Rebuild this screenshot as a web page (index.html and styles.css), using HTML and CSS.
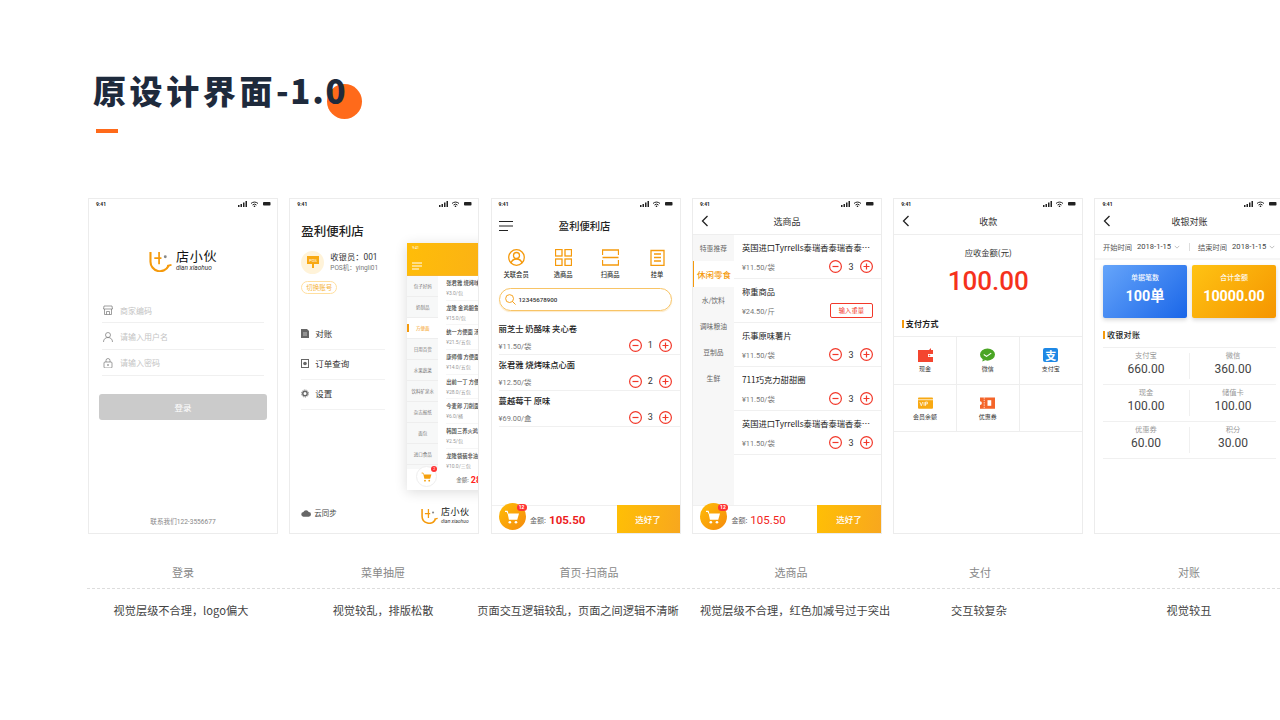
FILE: index.html
```html
<!DOCTYPE html>
<html lang="zh-CN">
<head>
<meta charset="utf-8">
<title>原设计界面-1.0</title>
<link rel="stylesheet" href="styles.css">
</head>
<body>
<svg class="defs" width="0" height="0">
  <symbol id="status" viewBox="0 0 33 6">
    <rect x="0" y="4" width="1.5" height="2" fill="#222"/><rect x="2.5" y="3" width="1.5" height="3" fill="#222"/><rect x="5" y="1.5" width="1.5" height="4.500" fill="#222"/><rect x="7.500" y="0" width="1.500" height="6" fill="#222"/>
    <path d="M13 2.500a5 5 0 0 1 7 0M14.500 4a3 3 0 0 1 4 0" fill="none" stroke="#222" stroke-width="1"/><circle cx="16.500" cy="5.300" r=".8" fill="#222"/>
    <rect x="25" y="1" width="7.500" height="3.500" rx=".8" fill="#222"/>
  </symbol>
  <symbol id="logo" viewBox="0 0 24 22">
    <path d="M1.500 1v10a10 10 0 0 0 19 4.500" fill="none" stroke="#f59a0c" stroke-width="2.200"/>
    <path d="M19 15.500l4.500-1" fill="none" stroke="#f59a0c" stroke-width="1.800"/>
    <path d="M10.500 1v13M5.500 7.500h7.500" fill="none" stroke="#f59a0c" stroke-width="1.800"/>
    <circle cx="17" cy="6" r="1.500" fill="#888"/>
  </symbol>
  <symbol id="back" viewBox="0 0 10 12"><path d="M7.500 1L2.500 6l5 5" fill="none" stroke="#222" stroke-width="1.300"/></symbol>
  <symbol id="minus" viewBox="0 0 13 13"><circle cx="6.500" cy="6.500" r="5.900" fill="none" stroke="#f2382a"/><path d="M3.500 6.500h6" stroke="#f2382a"/></symbol>
  <symbol id="plus" viewBox="0 0 13 13"><circle cx="6.500" cy="6.500" r="5.900" fill="none" stroke="#f2382a"/><path d="M3.500 6.500h6M6.500 3.500v6" stroke="#f2382a"/></symbol>
  <symbol id="cart" viewBox="0 0 18 16"><path d="M1 1.500h2.500l.7 2.500" fill="none" stroke="currentColor" stroke-width="1.300"/><path d="M4 4h13l-2 7H5.500z" fill="currentColor"/><circle cx="6.500" cy="14" r="1.500" fill="currentColor"/><circle cx="13.500" cy="14" r="1.500" fill="currentColor"/></symbol>
  <symbol id="chev" viewBox="0 0 8 5"><path d="M1 1l3 3 3-3" fill="none" stroke="#888" stroke-width=".7"/></symbol>
</svg>

<main class="page">
  <header class="hero">
    <h1 class="hero-title">原设计界面<span class="hero-ver">-1.0</span></h1>
    <span class="hero-dot"></span>
    <div class="hero-bar"></div>
  </header>

  <section class="phones">
    <!-- 登录 -->
    <article class="phone">
      <div class="status"><span>9:41</span><svg class="status-icons"><use href="#status"/></svg></div>
      <div class="brand login-brand">
        <svg class="brand-mark"><use href="#logo"/></svg>
        <div class="brand-text"><b>店小伙</b><i>dian xiaohuo</i></div>
      </div>
      <div class="login-form">
        <div class="field">
          <svg class="field-icon" viewBox="0 0 10 10"><path d="M1 1h8l.5 3H.5zM1.500 4v5.500h7V4M3.500 9.500V6.500h3v3" fill="none" stroke="#777" stroke-width=".7"/></svg>
          <span>商家编码</span>
        </div>
        <div class="field">
          <svg class="field-icon" viewBox="0 0 10 10"><circle cx="5" cy="3" r="2.500" fill="none" stroke="#777" stroke-width=".7"/><path d="M.5 10c0-3 2-4.500 4.500-4.500S9.500 7 9.500 10" fill="none" stroke="#777" stroke-width=".7"/></svg>
          <span>请输入用户名</span>
        </div>
        <div class="field">
          <svg class="field-icon" viewBox="0 0 10 10"><rect x="1" y="4" width="8" height="6" rx="1" fill="none" stroke="#777" stroke-width=".7"/><path d="M3 4V2.500a2 2 0 0 1 4 0V4" fill="none" stroke="#777" stroke-width=".7"/><rect x="4.500" y="6" width="1" height="2" fill="#777"/></svg>
          <span>请输入密码</span>
        </div>
        <div class="login-btn">登录</div>
      </div>
      <div class="login-foot">联系我们122-3556677</div>
    </article>

    <!-- 菜单抽屉 -->
    <article class="phone">
      <div class="status"><span>9:41</span><svg class="status-icons"><use href="#status"/></svg></div>
      <div class="menu">
        <h2 class="menu-title">盈利便利店</h2>
        <div class="user">
          <div class="avatar">
            <svg viewBox="0 0 12 13"><rect x="0" y="0" width="12" height="8" fill="#f8a913"/><rect x="5" y="8" width="2" height="4" fill="#f8a913"/><text x="6" y="5.500" text-anchor="middle" font-size="4" fill="#fff">POS</text></svg>
          </div>
          <div class="user-text"><b>收银员：001</b><span>POS机：yingli01</span></div>
        </div>
        <div class="switch">切换账号</div>
        <ul class="menu-list">
          <li><svg viewBox="0 0 8 9"><path d="M0 0h6l2 2v7H0z" fill="#666"/><path d="M2 4h4M2 6h4" stroke="#fff" stroke-width=".6"/></svg>对账</li>
          <li><svg viewBox="0 0 8 9"><rect x=".5" y=".5" width="7" height="8" fill="none" stroke="#666"/><circle cx="4" cy="4.500" r="1.800" fill="#666"/></svg>订单查询</li>
          <li><svg viewBox="0 0 9 9"><circle cx="4.500" cy="4.500" r="2.500" fill="none" stroke="#666" stroke-width="1.600"/><circle cx="4.500" cy="4.500" r="4" fill="none" stroke="#666" stroke-width=".9" stroke-dasharray="1.300 1.200"/></svg>设置</li>
        </ul>
      </div>
      <div class="menu-foot">
        <div class="sync"><svg viewBox="0 0 11 8"><path d="M3 8a2.500 2.500 0 0 1-.4-5A3.200 3.200 0 0 1 8.500 3 2.500 2.500 0 0 1 8.500 8z" fill="#666"/></svg>云同步</div>
        <div class="brand small-brand">
          <svg class="brand-mark"><use href="#logo"/></svg>
          <div class="brand-text"><b>店小伙</b><i>dian xiaohuo</i></div>
        </div>
      </div>
      <div class="drawer">
        <div class="drawer-head">
          <span>9:41</span>
          <svg viewBox="0 0 10 8"><path d="M0 1h10M0 4h10M0 7h7" stroke="#fff"/></svg>
        </div>
        <div class="drawer-body">
          <ul class="drawer-side">
            <li>包子好妈</li><li>奶制品</li><li class="on">方便面</li><li>日用百货</li><li>水果蔬菜</li><li>饮料矿泉水</li><li>杂志报纸</li><li>面包</li><li>进口食品</li>
          </ul>
          <div class="drawer-list">
            <div class="d-item"><b>张君雅 烧烤味点心面</b><span>¥3.0/包</span></div>
            <div class="d-item"><b>龙隆 金鸡鲍鱼面</b><span>¥15.0/包</span></div>
            <div class="d-item"><b>统一方便面 汤达人</b><span>¥21.5/五包</span></div>
            <div class="d-item"><b>康师傅 方便面袋装</b><span>¥14.0/五包</span></div>
            <div class="d-item"><b>出前一丁 方便面</b><span>¥28.0/五包</span></div>
            <div class="d-item"><b>今麦郎 刀削面桶</b><span>¥6.0/桶</span></div>
            <div class="d-item"><b>韩国三养火鸡面</b><span>¥2.5/包</span></div>
            <div class="d-item"><b>龙隆袋装非油炸</b><span>¥10.0/三包</span></div>
          </div>
        </div>
        <div class="drawer-foot">
          <div class="d-cart"><svg><use href="#cart"/></svg><em>2</em></div>
          <span class="d-label">金额:</span><b class="d-total">28.50</b>
        </div>
      </div>
    </article>

    <!-- 首页-扫商品 -->
    <article class="phone">
      <div class="status"><span>9:41</span><svg class="status-icons"><use href="#status"/></svg></div>
      <div class="home-head">
        <svg viewBox="0 0 14 10"><path d="M0 .5h14M0 5h14M0 9.500h9" stroke="#222"/></svg>
        <span>盈利便利店</span>
      </div>
      <div class="actions">
        <div class="action"><svg viewBox="0 0 17 17"><circle cx="8.500" cy="8.500" r="7.800" fill="none" stroke="#f59a0c"/><circle cx="8.500" cy="6.500" r="3" fill="none" stroke="#f59a0c"/><path d="M3 14c1-3 3-4 5.500-4s4.500 1 5.500 4" fill="none" stroke="#f59a0c"/></svg><span>关联会员</span></div>
        <div class="action"><svg viewBox="0 0 17 17"><g fill="none" stroke="#f59a0c"><rect x=".5" y=".5" width="6.500" height="6.500"/><rect x="10" y=".5" width="6.500" height="6.500"/><rect x=".5" y="10" width="6.500" height="6.500"/><rect x="10" y="10" width="6.500" height="6.500"/></g></svg><span>选商品</span></div>
        <div class="action"><svg viewBox="0 0 17 17"><path d="M.5 6V1h16v5M.5 11v5h16v-5M.5 8.500h16" fill="none" stroke="#f59a0c"/></svg><span>扫商品</span></div>
        <div class="action"><svg viewBox="0 0 17 17"><path d="M2 1.500h13v15H2zM5 5h7M5 8.500h7M5 12h7" fill="none" stroke="#f59a0c"/></svg><span>挂单</span></div>
      </div>
      <div class="search">
        <svg viewBox="0 0 12 12"><circle cx="5" cy="5" r="4.300" fill="none" stroke="#f59a0c"/><path d="M8 8l3.500 3.500" stroke="#f59a0c"/></svg>
        <span>12345678900</span>
      </div>
      <div class="goods">
        <div class="good"><div class="good-name">丽芝士 奶酪味 夹心卷</div><div class="good-row"><span>¥11.50/袋</span><div class="qty"><svg><use href="#minus"/></svg><b>1</b><svg><use href="#plus"/></svg></div></div></div>
        <div class="good"><div class="good-name">张君雅 烧烤味点心面</div><div class="good-row"><span>¥12.50/袋</span><div class="qty"><svg><use href="#minus"/></svg><b>2</b><svg><use href="#plus"/></svg></div></div></div>
        <div class="good"><div class="good-name">蔓越莓干 原味</div><div class="good-row"><span>¥69.00/盒</span><div class="qty"><svg><use href="#minus"/></svg><b>3</b><svg><use href="#plus"/></svg></div></div></div>
      </div>
      <div class="cartbar">
        <div class="cart-ball"><svg><use href="#cart"/></svg><em>12</em></div>
        <span class="cart-label">金额:</span><b class="cart-total">105.50</b>
        <div class="cart-btn">选好了</div>
      </div>
    </article>

    <!-- 选商品 -->
    <article class="phone">
      <div class="status"><span>9:41</span><svg class="status-icons"><use href="#status"/></svg></div>
      <div class="nav"><svg><use href="#back"/></svg><span>选商品</span></div>
      <div class="shop">
        <ul class="cats">
          <li>特惠推荐</li><li class="on">休闲零食</li><li>水/饮料</li><li>调味粮油</li><li>豆制品</li><li>生鲜</li>
        </ul>
        <div class="shop-list">
          <div class="s-item"><div class="s-name">英国进口Tyrrells泰瑞香泰瑞香泰瑞香</div><div class="s-row"><span>¥11.50/袋</span><div class="qty"><svg><use href="#minus"/></svg><b>3</b><svg><use href="#plus"/></svg></div></div></div>
          <div class="s-item"><div class="s-name">称重商品</div><div class="s-row"><span>¥24.50/斤</span><div class="weigh">输入重量</div></div></div>
          <div class="s-item"><div class="s-name">乐事原味薯片</div><div class="s-row"><span>¥11.50/袋</span><div class="qty"><svg><use href="#minus"/></svg><b>3</b><svg><use href="#plus"/></svg></div></div></div>
          <div class="s-item"><div class="s-name">711巧克力甜甜圈</div><div class="s-row"><span>¥11.50/袋</span><div class="qty"><svg><use href="#minus"/></svg><b>3</b><svg><use href="#plus"/></svg></div></div></div>
          <div class="s-item"><div class="s-name">英国进口Tyrrells泰瑞香泰瑞香泰瑞香</div><div class="s-row"><span>¥11.50/袋</span><div class="qty"><svg><use href="#minus"/></svg><b>3</b><svg><use href="#plus"/></svg></div></div></div>
        </div>
      </div>
      <div class="cartbar cartbar-alt">
        <div class="cart-ball"><svg><use href="#cart"/></svg><em>12</em></div>
        <span class="cart-label">金额:</span><b class="cart-total">105.50</b>
        <div class="cart-btn">选好了</div>
      </div>
    </article>

    <!-- 支付 -->
    <article class="phone">
      <div class="status"><span>9:41</span><svg class="status-icons"><use href="#status"/></svg></div>
      <div class="nav"><svg><use href="#back"/></svg><span>收款</span></div>
      <div class="due-label">应收金额(元)</div>
      <div class="due">100.00</div>
      <div class="mark pay-mark">支付方式</div>
      <div class="pay-grid">
        <div class="pay"><svg viewBox="0 0 15 14"><path d="M0 2h11l2-2v2h2v12H0z" fill="#f4452f"/><rect x="10" y="6" width="5" height="3" fill="#fff"/><circle cx="11.500" cy="7.500" r=".8" fill="#f4452f"/></svg><span>现金</span></div>
        <div class="pay"><svg viewBox="0 0 16 14"><ellipse cx="8" cy="6.500" rx="8" ry="6.500" fill="#4aa524"/><path d="M3 11l-.5 3 3-1.500z" fill="#4aa524"/><path d="M4 6.500l3 2 5-3.500" fill="none" stroke="#fff" stroke-width="1.200"/></svg><span>微信</span></div>
        <div class="pay"><i class="alipay">支</i><span>支付宝</span></div>
        <div class="pay"><svg viewBox="0 0 16 12"><rect width="16" height="12" rx="1" fill="#f8a913"/><path d="M0 2.500h16" stroke="#fff" stroke-width=".8"/><path d="M2 5l1.500 4L5 5M6.500 5v4M8 9V5h2v2H8" fill="none" stroke="#fff" stroke-width=".8"/></svg><span>会员余额</span></div>
        <div class="pay"><svg viewBox="0 0 16 12"><path d="M0 0h16v12H0V8a2 2 0 0 0 0-4z" fill="#f4652a"/><path d="M4.500 0v12" stroke="#fff" stroke-width=".8" stroke-dasharray="1.500 1"/><rect x="8" y="3" width="4" height="6" fill="#fff"/></svg><span>优惠券</span></div>
        <div class="pay"></div>
      </div>
    </article>

    <!-- 对账 -->
    <article class="phone">
      <div class="status"><span>9:41</span><svg class="status-icons"><use href="#status"/></svg></div>
      <div class="nav"><svg><use href="#back"/></svg><span>收银对账</span></div>
      <div class="filters">
        <div class="filter"><span>开始时间</span><b>2018-1-15</b><svg><use href="#chev"/></svg></div>
        <i class="filter-sep"></i>
        <div class="filter"><span>结束时间</span><b>2018-1-15</b><svg><use href="#chev"/></svg></div>
      </div>
      <div class="cards">
        <div class="card card-blue"><span>单据笔数</span><b>100单</b></div>
        <div class="card card-orange"><span>合计金额</span><b>10000.00</b></div>
      </div>
      <div class="mark rec-mark">收银对账</div>
      <div class="rec">
        <div class="rec-row"><div class="rec-cell"><span>支付宝</span><b>660.00</b></div><i></i><div class="rec-cell"><span>微信</span><b>360.00</b></div></div>
        <div class="rec-row"><div class="rec-cell"><span>现金</span><b>100.00</b></div><i></i><div class="rec-cell"><span>储值卡</span><b>100.00</b></div></div>
        <div class="rec-row"><div class="rec-cell"><span>优惠券</span><b>60.00</b></div><i></i><div class="rec-cell"><span>积分</span><b>30.00</b></div></div>
      </div>
    </article>
  </section>

  <div class="captions">
    <span>登录</span><span>菜单抽屉</span><span>首页-扫商品</span><span>选商品</span><span>支付</span><span>对账</span>
  </div>
  <div class="dash"></div>
  <div class="notes">
    <span>视觉层级不合理，logo偏大</span><span>视觉较乱，排版松散</span><span>页面交互逻辑较乱，页面之间逻辑不清晰</span><span>视觉层级不合理，红色加减号过于突出</span><span>交互较复杂</span><span>视觉较丑</span>
  </div>
</main>
</body>
</html>
```

FILE: styles.css
```css
* { box-sizing: border-box; }
html, body { margin: 0; padding: 0; background: #fff; }
body { font-family: Roboto, "Noto Sans CJK SC", sans-serif; color: #222; }
ul { list-style: none; margin: 0; padding: 0; }
h1, h2 { margin: 0; }
i, em { font-style: normal; }
.defs { position: absolute; }

.page { width: 1280px; height: 720px; overflow: hidden; padding-left: 88px; }

/* hero */
.hero { position: relative; height: 198px; padding: 68px 0 0 5px; }
.hero-title { position: relative; z-index: 1; font: 900 33px/44px "Noto Sans CJK SC", sans-serif; letter-spacing: 3.600px; color: #1e2a3c; white-space: nowrap; }
.hero-ver { letter-spacing: 1.700px; }
.hero-dot { position: absolute; left: 238.700px; top: 84px; width: 35px; height: 35px; border-radius: 50%; background: #ff6a1a; }
.hero-bar { width: 22px; height: 4px; margin: 17px 0 0 3px; background: #ff6a1a; }

/* phone shell */
.phones { display: flex; gap: 11.300px; }
.phone { position: relative; flex: none; width: 190px; height: 336px; border: 1px solid #ececec; background: #fff; display: flex; flex-direction: column; overflow: hidden; }
.status { flex: none; height: 10px; padding: 0 6.500px 0 7px; display: flex; justify-content: space-between; align-items: center; font-size: 5px; font-weight: 700; line-height: 10px; }
.status-icons { width: 33px; height: 6px; }

/* brand */
.brand { display: flex; align-items: center; }
.brand-text { display: flex; flex-direction: column; }
.brand-text b { font-weight: 400; color: #111; white-space: nowrap; }
.brand-text i { color: #333; font-style: italic; white-space: nowrap; }
.login-brand { margin: 41px 0 0 60px; height: 22px; }
.login-brand .brand-mark { width: 23px; height: 21px; margin-right: 4px; }
.login-brand b { font-size: 13px; line-height: 14px; letter-spacing: .8px; }
.login-brand i { font-size: 6.500px; line-height: 8px; }

/* login */
.login-form { margin: 25px 13px 0; }
.field { height: 26.300px; padding: 1.500px 0 0 1px; border-bottom: 1px solid #f0f0f0; display: flex; align-items: center; gap: 7px; font: 8px "Noto Sans CJK SC", sans-serif; color: #c4c4c4; }
.field-icon { width: 10px; height: 10px; flex: none; }
.login-btn { margin: 18px -3px 0; height: 26px; border-radius: 3px; background: #cbcbcb; color: #fff; text-align: center; font: 8.500px/26px "Noto Sans CJK SC", sans-serif; }
.login-foot { margin-top: auto; padding-bottom: 6px; text-align: center; font-size: 6.600px; line-height: 9px; color: #888; }

/* menu drawer */
.menu { padding: 0 11px; }
.menu-title { margin-top: 12px; font: 500 12.500px/20px "Noto Sans CJK SC", sans-serif; color: #222; }
.user { display: flex; align-items: center; gap: 6px; margin-top: 10px; }
.avatar { width: 23px; height: 23px; border-radius: 50%; background: #fff3d9; display: flex; align-items: center; justify-content: center; }
.avatar svg { width: 12px; height: 13px; }
.user-text { display: flex; flex-direction: column; }
.user-text b { font: 400 8.300px/12px Roboto, "Noto Sans CJK SC", sans-serif; color: #333; }
.user-text span { font-size: 6.500px; line-height: 11px; color: #777; }
.switch { width: 36px; height: 13px; margin-top: 7px; border: 1px solid #ffdf9f; border-radius: 7px; text-align: center; font: 6.500px/11px "Noto Sans CJK SC", sans-serif; color: #f5b33c; }
.menu-list { width: 84px; margin-top: 26px; }
.menu-list li { height: 30px; padding-bottom: 3px; border-bottom: 1px solid #f2f2f2; display: flex; align-items: center; gap: 6px; font: 8.500px "Noto Sans CJK SC", sans-serif; color: #333; }
.menu-list svg { width: 8px; height: 9px; flex: none; }
.menu-foot { margin-top: auto; padding: 0 9px 9px 11px; display: flex; justify-content: space-between; align-items: flex-end; }
.sync { display: flex; align-items: center; gap: 3px; margin-bottom: 5px; font: 7.500px/12px "Noto Sans CJK SC", sans-serif; color: #444; }
.sync svg { width: 10px; height: 8px; }
.small-brand .brand-mark { width: 17px; height: 16px; margin-right: 3px; }
.small-brand b { font-size: 9px; line-height: 11px; letter-spacing: .4px; }
.small-brand i { font-size: 5px; line-height: 6px; }

.drawer { position: absolute; left: 117px; top: 44px; width: 130px; height: 247px; background: #fff; box-shadow: 0 2px 12px rgba(0,0,0,.14); display: flex; flex-direction: column; }
.drawer-head { flex: none; height: 33px; padding: 2px 0 0 5px; background: linear-gradient(100deg, #ffbd08, #f8aa1e); border-bottom: 1px solid #f7b52a; color: #fff; font-size: 3.500px; line-height: 7px; }
.drawer-head svg { display: block; width: 10px; height: 8px; margin-top: 10px; }
.drawer-body { flex: none; height: 193px; display: flex; overflow: hidden; }
.drawer-side { flex: none; width: 31px; background: #f7f8f8; }
.drawer-side li { height: 21px; border-bottom: 1px solid #eee; text-align: center; font: 4.500px/21px "Noto Sans CJK SC", sans-serif; color: #777; }
.drawer-side li.on { position: relative; background: #fff; color: #f59a0c; }
.drawer-side li.on::before { content: ""; position: absolute; left: 0; top: 6px; width: 1.500px; height: 8px; background: #f59a0c; }
.drawer-list { padding-left: 8px; flex: 1; }
.d-item { height: 24.700px; padding-top: 3px; border-bottom: 1px solid #f6f6f6; }
.d-item b { display: block; font: 500 5.300px/8px "Noto Sans CJK SC", sans-serif; color: #444; white-space: nowrap; }
.d-item span { display: block; margin-top: 3px; font-size: 5px; line-height: 7px; color: #999; }
.drawer-foot { flex: 1; display: flex; align-items: center; padding-left: 9px; }
.d-cart { position: relative; width: 21px; height: 21px; margin-top: -6px; border-radius: 50%; border: 1px solid #eee; background: #fff; color: #f5a00c; display: flex; align-items: center; justify-content: center; }
.d-cart svg { width: 11px; height: 10px; }
.d-cart em { position: absolute; right: -1px; top: -1px; width: 6px; height: 6px; border-radius: 50%; background: #f33; color: #fff; font-size: 3.500px; line-height: 6px; text-align: center; }
.d-label { margin-left: 19px; font: 5.500px "Noto Sans CJK SC", sans-serif; color: #666; }
.d-total { margin-left: 2px; font-size: 9px; color: #f22; }

/* home */
.home-head { flex: none; position: relative; height: 33px; display: flex; align-items: center; justify-content: center; font: 500 10.300px "Noto Sans CJK SC", sans-serif; color: #222; }
.home-head span { margin-left: -2px; }
.home-head svg { position: absolute; left: 7px; top: 12px; width: 14px; height: 10px; }
.actions { flex: none; margin-top: 7px; padding: 0 1px; display: grid; grid-template-columns: repeat(4, 47px); }
.action { display: flex; flex-direction: column; align-items: center; }
.action svg { width: 17px; height: 17px; }
.action svg circle, .action svg path, .action svg rect { stroke-width: 1.300px; }
.action span { margin-top: 3.500px; font: 500 6.300px/9px "Noto Sans CJK SC", sans-serif; color: #333; }
.search { flex: none; height: 23px; margin: 9.500px 8px 0 7px; border: 1px solid #f8c466; border-radius: 12px; box-shadow: 0 1px 1px rgba(245,170,40,.25); display: flex; align-items: center; gap: 3px; padding-left: 5px; font-size: 6.200px; font-weight: 500; color: #333; }
.search svg { width: 11px; height: 11px; }
.goods { margin: 8px 0 0 7px; }
.good { height: 36px; border-bottom: 1px solid #f0f0f0; }
.good-name { height: 19px; font: 500 8.300px/19px "Noto Sans CJK SC", sans-serif; color: #222; }
.good-row { height: 14px; padding-right: 7.500px; display: flex; justify-content: space-between; align-items: center; font-size: 7.400px; color: #777; }
.qty { display: flex; align-items: center; }
.qty svg { width: 13px; height: 13px; stroke-width: 1.200px; }
.qty b { width: 17.500px; text-align: center; font-weight: 400; font-size: 9px; color: #333; }

/* cart bar */
.cartbar { flex: none; margin-top: auto; height: 28px; border-top: 1px solid #f0f0f0; display: flex; align-items: center; padding-left: 7px; position: relative; }
.cart-ball { position: relative; flex: none; width: 27px; height: 27px; margin-top: -6px; border-radius: 50%; background: linear-gradient(135deg, #ffbd08, #f58a0c); color: #fff; display: flex; align-items: center; justify-content: center; }
.cart-ball svg { width: 16px; height: 14px; }
.cart-ball em { position: absolute; right: -1px; top: 1px; width: 10px; height: 7px; border-radius: 4px; background: #f33; color: #fff; font-size: 5px; font-weight: 700; line-height: 7px; text-align: center; }
.cart-label { margin-left: 4.500px; font: 7px "Noto Sans CJK SC", sans-serif; color: #666; }
.cart-total { margin-left: 3px; font-size: 11.500px; font-weight: 700; color: #ec1c1c; }
.cart-btn { margin-left: auto; width: 63px; height: 28px; margin-top: -1px; background: linear-gradient(100deg, #ffbf05, #f8a71e); color: #fff; text-align: center; font: 500 8.500px/28px "Noto Sans CJK SC", sans-serif; }
.cartbar-alt { padding-left: 7px; }
.cartbar-alt .cart-total { font-weight: 400; font-size: 11.500px; color: #f2241c; }
.cartbar-alt .cart-btn { width: 64px; }

/* nav */
.nav { flex: none; position: relative; height: 26px; border-bottom: 1px solid #eee; display: flex; align-items: center; justify-content: center; font: 9px "Noto Sans CJK SC", sans-serif; color: #333; }
.nav svg { position: absolute; left: 7px; top: 6px; width: 10px; height: 12px; }

/* shop */
.shop { flex: 1; display: flex; min-height: 0; }
.cats { flex: none; width: 41px; background: #f7f7f7; }
.cats li { height: 26px; text-align: center; font: 6.800px/26px "Noto Sans CJK SC", sans-serif; color: #666; }
.cats li.on { background: #fff; border-left: 1.500px solid #f59a0c; color: #f59a0c; font-size: 8.500px; font-weight: 500; white-space: nowrap; }
.shop-list { flex: 1; min-width: 0; padding-left: 8px; }
.s-item { height: 44px; border-bottom: 1px solid #f0f0f0; margin-left: -8px; padding-left: 8px; }
.s-name { height: 25px; padding-right: 8px; font: 8.300px/25px "Noto Sans CJK SC", Roboto, sans-serif; color: #222; white-space: nowrap; overflow: hidden; text-overflow: ellipsis; }
.s-row { height: 13px; padding-right: 8px; display: flex; justify-content: space-between; align-items: center; font-size: 7.400px; color: #777; }
.weigh { width: 43px; height: 15px; margin-top: -1px; border: 1px solid #f2382a; border-radius: 2px; text-align: center; font: 6.300px/13px "Noto Sans CJK SC", sans-serif; color: #f2382a; }

/* pay */
.due-label { margin-top: 10px; text-align: center; font: 8.300px/14px "Noto Sans CJK SC", sans-serif; color: #333; }
.due { margin-top: 7px; text-align: center; font-size: 26px; font-weight: 500; line-height: 30px; color: #f5321c; }
.mark { position: relative; padding-left: 4px; font: 700 8px/14px "Noto Sans CJK SC", sans-serif; color: #222; letter-spacing: .3px; }
.mark::before { content: ""; position: absolute; left: 0; top: 3px; width: 2px; height: 8px; background: #f59a0c; }
.pay-mark { margin: 21px 0 0 7.500px; }
.pay-grid { margin-top: 5px; display: grid; grid-template-columns: repeat(3, 1fr); border-top: 1px solid #eee; }
.pay { height: 47.500px; padding-top: 11px; border-bottom: 1px solid #eee; border-right: 1px solid #eee; display: flex; flex-direction: column; align-items: center; }
.pay:nth-child(3n) { border-right: 0; }
.pay svg, .alipay { width: 15px; height: 14px; flex: none; }
.pay span { margin-top: 3px; font: 6px/8px "Noto Sans CJK SC", sans-serif; color: #333; }
.alipay { border-radius: 2px; background: #1e88e5; color: #fff; font: 700 11px/14px "Noto Sans CJK SC", sans-serif; text-align: center; }

/* reconcile */
.filters { flex: none; height: 25px; border-bottom: 2px solid #f6f6f6; padding-left: 7.500px; display: flex; align-items: center; font: 7.250px "Noto Sans CJK SC", sans-serif; color: #555; }
.filter { display: flex; align-items: center; white-space: nowrap; }
.filter b { margin-left: 5px; font: 400 7.600px Roboto, sans-serif; color: #444; }
.filter svg { width: 6px; height: 4px; margin-left: 3px; }
.filter-sep { flex: none; width: 1px; height: 8px; margin: 0 8.500px; background: #ddd; }
.cards { flex: none; margin: 5px 0 0 7.500px; display: flex; gap: 5px; }
.card { flex: none; width: 84px; height: 53px; border-radius: 2px; box-shadow: 0 2px 4px rgba(0,0,0,.16); color: #fff; display: flex; flex-direction: column; align-items: center; }
.card span { margin-top: 7px; font: 500 7px/10px "Noto Sans CJK SC", sans-serif; opacity: .95; }
.card b { margin-top: 4px; font: 700 14.300px/20px Roboto, "Noto Sans CJK SC", sans-serif; }
.card-blue { background: linear-gradient(135deg, #66a5fa, #1a66e8); }
.card-orange { background: linear-gradient(135deg, #ffc313, #f59500); }
.rec-mark { margin: 10px 0 0 7.500px; font-weight: 500; }
.rec { margin: 5px 0 0 7.500px; width: 173px; border-top: 1px solid #f0f0f0; }
.rec-row { height: 37px; border-bottom: 1px solid #f0f0f0; display: grid; grid-template-columns: 1fr 1px 1fr; }
.rec-row i { height: 26px; margin-top: 5px; background: #f0f0f0; }
.rec-cell { padding-top: 1px; display: flex; flex-direction: column; align-items: center; }
.rec-cell span { font: 7.300px/12px "Noto Sans CJK SC", sans-serif; color: #999; }
.rec-cell b { font-weight: 400; font-size: 12px; line-height: 16px; color: #444; }

/* captions */
.captions, .notes { display: grid; font-family: "Noto Sans CJK SC", sans-serif; line-height: 20px; text-align: center; white-space: nowrap; }
.captions { margin: 28px 0 0; grid-template-columns: 190px 210px 202px 202px 176px 242px; font-size: 11px; color: #888; }
.dash { margin: 6px 0 0 -1px; height: 0; border-top: 1px dashed #ddd; }
.notes { margin: 11px 0 0 -18px; grid-template-columns: 222px 182px 208px 226px 142px 278px; font-size: 11.200px; color: #444; }
```
